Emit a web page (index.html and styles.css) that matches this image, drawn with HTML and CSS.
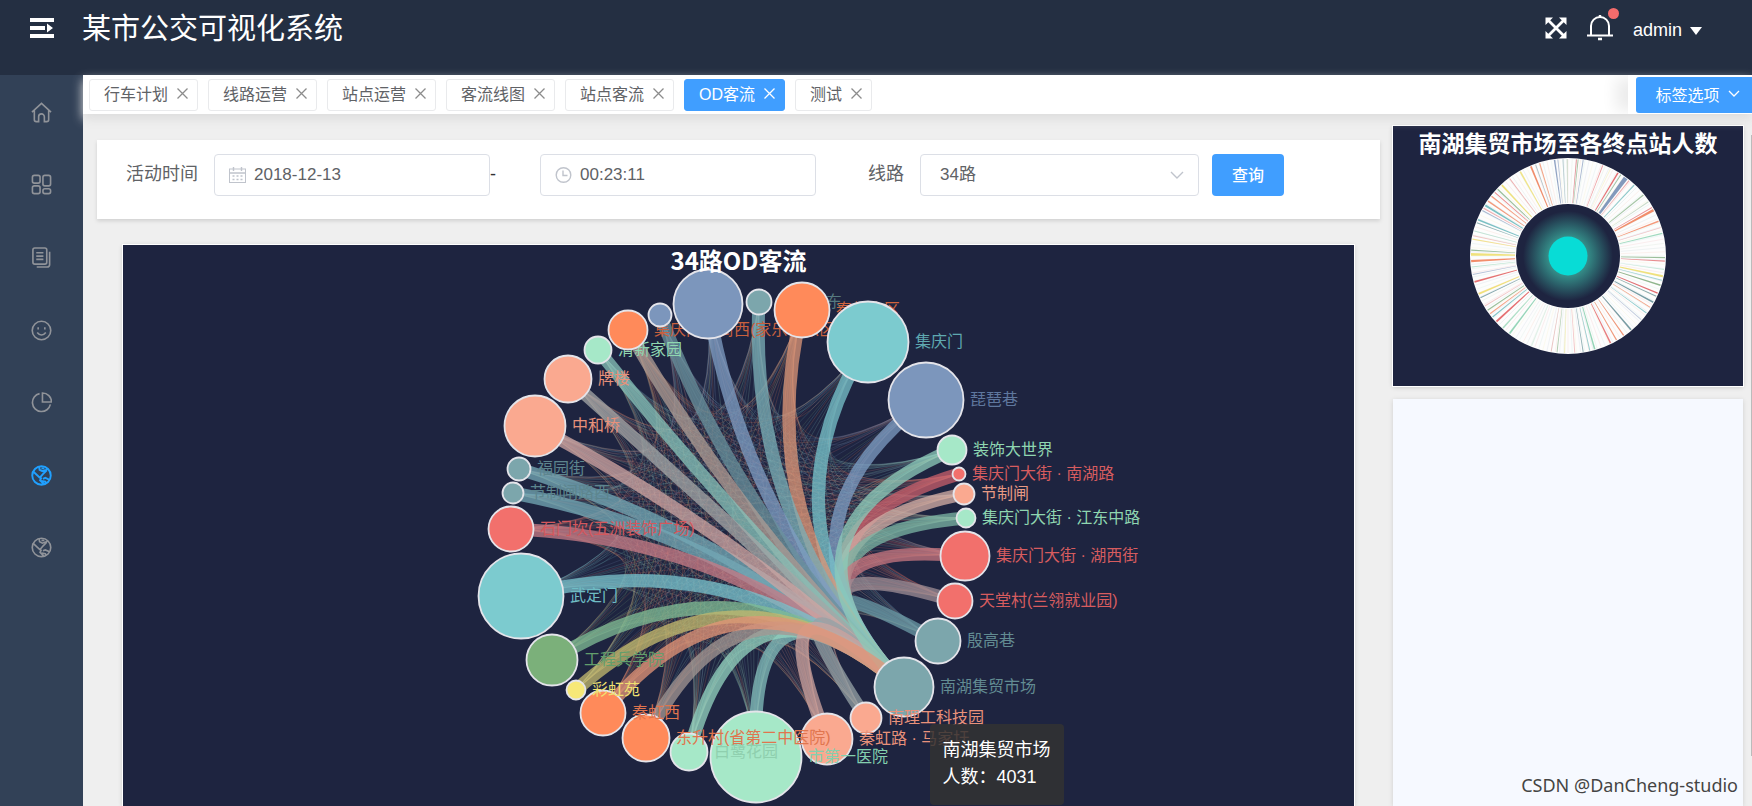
FILE: index.html
```html
<!DOCTYPE html>
<html lang="zh-CN">
<head>
<meta charset="utf-8">
<title>某市公交可视化系统</title>
<link rel="stylesheet" href="styles.css">
</head>
<body>
<div class="app">
  <header class="header">
    <button class="icon-btn menu-btn" aria-label="折叠菜单">
      <svg width="24" height="22" viewBox="0 0 24 22" fill="#fff"><path d="M0 1h24v4H0zM0 9h15v4H0zM0 17h24v4H0zM17 6.500l6 4.500-6 4.500z"/></svg>
    </button>
    <h1 class="brand">某市公交可视化系统</h1>
    <div class="header-right">
      <button class="icon-btn" aria-label="全屏">
        <svg width="22" height="22" viewBox="0 0 22 22"><path d="M3 3l16 16M19 3L3 19" stroke="#fff" stroke-width="2.800"/><path d="M.5.5h7.500l-7.500 7.500zM21.500.5v7.500l-7.500-7.500zM.5 21.500v-7.500l7.500 7.500zM21.500 21.500h-7.500l7.500-7.500z" fill="#fff"/></svg>
      </button>
      <button class="icon-btn bell" aria-label="消息">
        <svg width="26" height="27" viewBox="0 0 26 27" fill="none" stroke="#fff" stroke-width="2"><path d="M4 21.500V12a9 9 0 0 1 18 0v9.500M0 21.500h26"/><path d="M13 3V1M11 25h4" stroke-width="2.400"/></svg>
        <span class="badge"></span>
      </button>
      <button class="user">admin <span class="caret"></span></button>
    </div>
  </header>
  <div class="body">
    <nav class="sidebar">
      <div class="menu">
      <a href="#" aria-label="首页"><svg viewBox="0 0 22 22"><path d="M1 10.500L11 1.500l10 9M3.500 9v9.500a2 2 0 0 0 2 2H8v-5a3 3 0 0 1 6 0v5h2.500a2 2 0 0 0 2-2V9"/></svg></a>
      <a href="#" aria-label="组件"><svg viewBox="0 0 22 22"><rect x="1.500" y="1.500" width="8" height="8" rx="2"/><rect x="12.500" y="1.500" width="8" height="11" rx="2"/><rect x="1.500" y="12.500" width="8" height="8" rx="2"/><rect x="12.500" y="15.500" width="8" height="5" rx="2"/></svg></a>
      <a href="#" aria-label="文档"><svg viewBox="0 0 22 22"><rect x="2" y="1" width="14.500" height="17" rx="2"/><path d="M5.500 6H13M5.500 9.500H13M5.500 13H13M19.500 5v13.500a2.500 2.500 0 0 1-2.500 2.500H6"/></svg></a>
      <a href="#" aria-label="表情"><svg viewBox="0 0 22 22"><circle cx="11" cy="11" r="9.700"/><path d="M6.500 13q4.500 5.500 9 0M7.500 7.500v2.500M14.500 7.500v2.500"/></svg></a>
      <a href="#" aria-label="图表"><svg viewBox="0 0 22 22"><path d="M9 1.700a9.500 9.500 0 1 0 11.300 11.300M12 1v9.500h9.500A9.500 9.500 0 0 0 12 1z"/></svg></a>
      <a href="#" class="active" aria-label="客流"><svg viewBox="0 0 22 22"><circle cx="11" cy="11" r="9.700"/><path d="M2 6.500l7 6.500 1.500 1-1 2 4 4M8.500 2l.5 3 3 1.500 4-1.500 1.500-1M9.500 13l3-3.500 4-4M12.500 14.500l2.500-1 4.500 2M12 20.500v-3.500l3 .5 1 2M11 3.500h3"/></svg></a>
      <a href="#" aria-label="测试"><svg viewBox="0 0 22 22"><circle cx="11" cy="11" r="9.700"/><path d="M2 6.500l7 6.500 1.500 1-1 2 4 4M8.500 2l.5 3 3 1.500 4-1.500 1.500-1M9.500 13l3-3.500 4-4M12.500 14.500l2.500-1 4.500 2M12 20.500v-3.500l3 .5 1 2M11 3.500h3"/></svg></a>
      </div>
    </nav>
    <div class="page">
      <div class="tags">
        <ul class="tag-list">
          <li class="tag"><a href="#">行车计划</a><button aria-label="关闭"><svg viewBox="0 0 11 11"><path d="M.5.5l10 10M10.500.5l-10 10"/></svg></button></li>
          <li class="tag"><a href="#">线路运营</a><button aria-label="关闭"><svg viewBox="0 0 11 11"><path d="M.5.5l10 10M10.500.5l-10 10"/></svg></button></li>
          <li class="tag"><a href="#">站点运营</a><button aria-label="关闭"><svg viewBox="0 0 11 11"><path d="M.5.5l10 10M10.500.5l-10 10"/></svg></button></li>
          <li class="tag"><a href="#">客流线图</a><button aria-label="关闭"><svg viewBox="0 0 11 11"><path d="M.5.5l10 10M10.500.5l-10 10"/></svg></button></li>
          <li class="tag"><a href="#">站点客流</a><button aria-label="关闭"><svg viewBox="0 0 11 11"><path d="M.5.5l10 10M10.500.5l-10 10"/></svg></button></li>
          <li class="tag current"><a href="#">OD客流</a><button aria-label="关闭"><svg viewBox="0 0 11 11"><path d="M.5.5l10 10M10.500.5l-10 10"/></svg></button></li>
          <li class="tag"><a href="#">测试</a><button aria-label="关闭"><svg viewBox="0 0 11 11"><path d="M.5.5l10 10M10.500.5l-10 10"/></svg></button></li>
        </ul>
        <div class="tag-tools">
          <button class="tag-options">标签选项 <svg width="12" height="8" viewBox="0 0 12 8"><path d="M1 1l5 5 5-5" fill="none" stroke="#fff" stroke-width="1.300"/></svg></button>
        </div>
      </div>
      <main class="content">
        <div class="left">
          <form class="filter">
            <label for="date">活动时间</label>
            <div class="field">
              <svg class="prefix" width="17" height="16" viewBox="0 0 17 16" fill="none" stroke="#c0c4cc"><rect x=".5" y="2" width="16" height="13.500"/><path d="M.5 6h16M4.500 0v4M12.500 0v4" stroke-width="1.400"/><path d="M3.500 9h10M3.500 12.500h10" stroke-dasharray="2 2" stroke-width="1.400"/></svg>
              <input id="date" type="text" value="2018-12-13">
            </div>
            <span class="dash">-</span>
            <div class="field">
              <svg class="prefix" width="17" height="16" viewBox="0 0 17 16" fill="none" stroke="#c0c4cc" stroke-width="1.400"><circle cx="8.500" cy="8" r="7.300"/><path d="M8 3.500V8.500h4.500"/></svg>
              <input type="text" value="00:23:11" aria-label="时间">
            </div>
            <label class="route-label" for="route">线路</label>
            <div class="field select-field">
              <select id="route"><option>34路</option></select>
              <svg class="suffix" width="14" height="9" viewBox="0 0 14 9"><path d="M1 1l6 6 6-6" fill="none" stroke="#c0c4cc" stroke-width="1.400"/></svg>
            </div>
            <button type="button" class="query">查询</button>
          </form>
          <section class="chart od">
            <h2>34路OD客流</h2>
            <svg id="od" class="od-svg" viewBox="123 245 1231 561" preserveAspectRatio="xMidYMin meet"></svg>
            <div class="tooltip">南湖集贸市场<br>人数：4031</div>
          </section>
        </div>
        <aside class="right">
          <section class="chart donut">
            <h2>南湖集贸市场至各终点站人数</h2>
            <svg id="donut" width="198" height="198" viewBox="-99 -99 198 198"></svg>
          </section>
          <section class="empty"></section>
        </aside>
      </main>
      <span class="scroll-thumb"></span>
    </div>
  </div>
  <div class="watermark">CSDN @DanCheng-studio</div>
</div>
<script src="chart.js"></script>
</body>
</html>
```
FILE: styles.css
```css
* { box-sizing: border-box; }
body {
  margin: 0;
  font-family: "Liberation Sans", "Noto Sans CJK SC", sans-serif;
  font-size: 16px;
  color: #606266;
}
button { border: 0; padding: 0; background: none; font: inherit; color: inherit; cursor: pointer; }
a { color: inherit; text-decoration: none; }
h1, h2 { margin: 0; }
svg { display: block; }

.app { position: relative; height: 100vh; display: flex; flex-direction: column; overflow: hidden; }
.header {
  flex: none;
  height: 75px;
  padding: 0 50px 20px 30px;
  display: flex;
  align-items: center;
  background: #242f42;
  color: #fff;
}
.brand { margin-left: 28px; padding-top: 3px; font-size: 29px; font-weight: 400; line-height: 40px; }
.header-right { margin-left: auto; display: flex; align-items: center; gap: 20px; font-size: 18px; }
.bell { position: relative; }
.badge { position: absolute; top: -6px; right: -6px; width: 11px; height: 11px; border-radius: 50%; background: #f56c6c; }
.user { display: flex; align-items: center; gap: 8px; padding-top: 6px; }
.caret { border: 6px solid transparent; border-top: 8px solid #fff; border-bottom: 0; }

.body { flex: 1; display: flex; min-height: 0; }
.sidebar { flex: none; width: 83px; padding-top: 1px; background: #324157; color: #909399; }
.menu { height: 508px; display: flex; flex-direction: column; }
.menu a { flex: 1; display: flex; align-items: center; justify-content: center; }
.menu svg { width: 21px; height: 21px; fill: none; stroke: currentColor; stroke-width: 1.700; }
.menu .active { color: #20a0ff; }
.menu .active svg { stroke-width: 2; }

.page { position: relative; flex: 1; min-width: 0; display: flex; flex-direction: column; background: #efefef; }
.tags {
  position: relative;
  z-index: 1;
  flex: none;
  height: 39px;
  display: flex;
  justify-content: space-between;
  background: #fff;
  box-shadow: 0 5px 10px #ddd;
}
.tag-list { display: flex; gap: 10px; margin: 0; padding: 4px 0 0 6px; list-style: none; }
.tag {
  height: 32px;
  display: flex;
  align-items: center;
  gap: 9px;
  padding: 0 9px 4px 14px;
  border: 1px solid #e9eaec;
  border-radius: 3px;
}
.tag svg { width: 11px; height: 11px; fill: none; stroke: #8c8c8c; stroke-width: 1.300; }
.tag.current { background: #409eff; border-color: #409eff; color: #fff; }
.tag.current svg { stroke: #fff; }
.tag-tools { padding: 2px 0 2px 8px; background: #fff; box-shadow: -15px 0 15px -3px rgba(0, 0, 0, .08); clip-path: inset(0 0 0 -40px); }
.tag-options {
  height: 36px;
  width: 116px;
  display: flex;
  align-items: center;
  justify-content: center;
  gap: 8px;
  padding: 0 0 3px 7px;
  border-radius: 3px 0 0 3px;
  background: #409eff;
  color: #fff;
}

.content { flex: 1; min-height: 0; display: flex; gap: 13px; padding: 12px 9px 0 14px; }
.left { flex: 1; min-width: 0; padding-top: 14px; }
.filter {
  height: 79px;
  display: flex;
  padding: 14px 29px 23px;
  background: #fff;
  box-shadow: 0 2px 4px rgba(0, 0, 0, .13);
}
.filter label { flex: none; width: 88px; font-size: 18px; line-height: 40px; }
.filter .route-label { width: auto; margin: 0 16px 0 52px; }
.field { position: relative; flex: 0 1 276px; min-width: 0; }
.field input, .field select {
  width: 100%;
  height: 42px;
  padding: 0 12px 0 39px;
  border: 1px solid #dcdfe6;
  border-radius: 4px;
  background: #fff;
  font: inherit;
  font-size: 17px;
  color: #606266;
}
.select-field { flex-basis: 279px; }
.field select { padding: 0 40px 2px 19px; appearance: none; }
.prefix { position: absolute; left: 15px; top: 13px; }
.suffix { position: absolute; right: 15px; top: 17px; pointer-events: none; }
.dash { flex: none; width: 50px; line-height: 40px; font-size: 18px; color: #303133; }
.query { flex: none; width: 72px; height: 42px; margin-left: 13px; padding-bottom: 2px; border-radius: 4px; background: #409eff; color: #fff; font-weight: 500; }

.chart { position: relative; background: #1e2440; box-shadow: 0 0 0 1px #fff, 0 1px 5px rgba(0, 0, 0, .2); }
.chart h2 { font-family: "Noto Sans CJK SC", sans-serif; font-size: 23px; line-height: 32px; text-align: center; color: #fff; }
.od { margin: 26px 26px 0; }
.od h2 { position: absolute; inset: 0 0 auto; font-size: 24px; line-height: 30px; }
.od-svg { width: 100%; }
.od-svg text { font-family: "Liberation Sans", "Noto Sans CJK SC", sans-serif; font-size: 16px; }
.tooltip {
  position: absolute;
  left: calc(50% + 191px);
  top: 479px;
  padding: 13px 13px 14px;
  border-radius: 4px;
  background: rgba(50, 50, 50, .85);
  font-size: 18px;
  line-height: 27px;
  white-space: nowrap;
  color: #fff;
}

.right { flex: 0 0 350px; display: flex; flex-direction: column; gap: 13px; }
.donut { flex: none; height: 260px; }
.donut svg { margin: -1px auto 0; }
.empty { flex: 1; background: #f6f9ff; box-shadow: 0 1px 5px rgba(0, 0, 0, .13); }
.scroll-thumb { position: absolute; right: 0; top: 60px; bottom: 50px; width: 1px; background: #bbb; }
.watermark {
  position: absolute;
  right: 14px;
  bottom: 8px;
  font-family: "Noto Sans", sans-serif;
  font-size: 18px;
  line-height: 26px;
  color: #444;
  text-shadow: 0 0 1px #fff;
}
```
FILE: chart.js
```js
const NS = 'http://www.w3.org/2000/svg';
function add(parent, tag, attrs, text) {
  const el = document.createElementNS(NS, tag);
  for (const k in attrs) el.setAttribute(k, attrs[k]);
  if (text) el.textContent = text;
  parent.appendChild(el);
  return el;
}

const BLUE = '#7c96bc', TEAL = '#7ca6ac', ORANGE = '#ff8a5a', CYAN = '#7ccbcf', MINT = '#a6e8c8',
  RED = '#f2706c', SALMON = '#faa990', GREEN = '#7bb07a', YELLOW = '#f7e878';

// x, y, radius, fill, label, label colour, link colour
const nodes = [
  [926, 400, 37, BLUE, '琵琶巷', '#5f779e', '#7490b4'],
  [952, 450, 14, MINT, '装饰大世界', '#8fd6b0', '#82bcab'],
  [959, 474, 6, RED, '集庆门大街 · 南湖路', '#d75c5f', '#b85862'],
  [964, 494, 10, SALMON, '节制闸', '#e89a84', '#c4a299'],
  [966, 518, 9, MINT, '集庆门大街 · 江东中路', '#8fd6b0', '#71a797'],
  [965, 556, 24, RED, '集庆门大街 · 湖西街', '#d75c5f', '#b76d76'],
  [955, 601, 17, RED, '天堂村(兰翎就业园)', '#d75c5f', '#91838a'],
  [938, 641, 22, TEAL, '殷高巷', '#628b92', '#638f9a'],
  [904, 687, 29, TEAL, '南湖集贸市场', '#628b92', null],
  [866, 718, 15, SALMON, '南理工科技园', '#e8917a', '#8a9699'],
  [827, 739, 25, SALMON, '秦虹路 · 马家圩', '#e8917a', '#bd9793'],
  [756, 757, 45, MINT, '市第一医院', '#84cfae', '#78b0ae'],
  [689, 752, 18, MINT, '白鹭花园', '#8fcfae', '#88c4b2'],
  [646, 738, 23, ORANGE, '东升村(省第二中医院)', '#e0754e', '#978c88'],
  [603, 713, 22, ORANGE, '秦虹西', '#e0754e', '#d18a6f'],
  [576, 690, 9, YELLOW, '彩虹苑', '#efe070', '#b5ab66'],
  [552, 660, 25, GREEN, '工程兵学院', '#629e6c', '#76ae8a'],
  [521, 596, 42, CYAN, '武定门', '#6fbcc4', '#70b4be'],
  [511, 529, 22, RED, '石门坎(五洲装饰广场)', '#d4575c', '#b8727c'],
  [513, 493, 10, TEAL, '节制闸路西', '#5d858e', '#6b9ca8'],
  [519, 469, 11, TEAL, '福园街', '#5d858e', '#6b9ca8'],
  [535, 426, 30, SALMON, '中和桥', '#e8917a', '#c09a97'],
  [568, 379, 23, SALMON, '牌楼', '#e8917a', '#989b9b'],
  [598, 350, 13, MINT, '清新家园', '#8fd6b0', '#7db4ab'],
  [628, 330, 19, ORANGE, '集庆门大街西(家乐福东区)', '#c8603e', '#a09189'],
  [660, 315, 11, BLUE, '', '#5f779e', '#618591'],
  [708, 304, 34, BLUE, '', '#5f779e', '#7590b4'],
  [759, 302, 12, TEAL, '雨花新东', '#55797f', '#71a2a9'],
  [802, 310, 27, ORANGE, '秦虹小区', '#d0643e', '#cc8b6e'],
  [868, 342, 40, CYAN, '集庆门', '#5fa8b0', '#6fb4bb']
];
const center = [738.5, 529];
const target = nodes[8];

function arc(a, b) {
  const cx = center[0] * 0.9 + (a[0] + b[0]) * 0.05;
  const cy = center[1] * 0.9 + (a[1] + b[1]) * 0.05;
  return `M${a[0]} ${a[1]}Q${cx} ${cy} ${b[0]} ${b[1]}`;
}
function lighten(hex) {
  const ch = [1, 3, 5].map(i => Math.min(255, Math.round(parseInt(hex.slice(i, i + 2), 16) * 1.08)));
  return `rgb(${ch.join(',')})`;
}

const od = document.getElementById('od');
const mesh = add(od, 'g', { fill: 'none', 'stroke-width': 1 });
nodes.forEach((a, i) => nodes.forEach((b, j) => {
  if (j > i) add(mesh, 'path', { d: arc(a, b), stroke: (i + j) % 2 ? a[3] : b[3], 'stroke-opacity': 0.17 });
}));
// Links on the lower left are painted last, over the bundle
const links = add(od, 'g', { fill: 'none', 'stroke-width': 13 });
const order = [2, 3, 4, 5, 6, 7, 0, 29, 28, 27, 26, 25, 24, 23, 22, 20, 19, 18, 21, 17, 16, 15, 9, 11, 12, 13, 10, 1, 14];
order.forEach(i => add(links, 'path', { d: arc(nodes[i], target), stroke: lighten(nodes[i][6]), 'stroke-opacity': 0.76 }));
nodes.forEach(n => {
  add(od, 'circle', { cx: n[0], cy: n[1], r: n[2] + 0.5, fill: n[3], stroke: '#e4e4ea', 'stroke-width': 1.8 });
  if (n[4]) add(od, 'text', { x: n[0] + n[2] + 7, y: n[1] + 5, fill: n[5] }, n[4]);
});

// Clockwise angle from the top, colour, width, strength
const rays = [
  [5, 'r', 1, .7], [6, 'g', 1, .8], [9, 'b', 1, .7], [21, 'r', 1, .7], [26, 'y', 1, .3], [31, 'r', 1.6, 1], [33, 'g', 1, .9],
  [36.5, 'b', 4.5, 1], [39, 'r', 1, .6], [43, 't', 1.2, .9], [51, 'g', 1.4, .8], [56, 'g', 1, .5], [60, 'r', 1, .7],
  [61.8, 'o', 2.4, 1], [69, 'o', 1.4, .9], [73, 'r', 1, .4], [76.5, 'm', 1.4, .9], [91, 'g', 1.3, .9], [93, 'r', 1.2, .8],
  [98, 'm', 1, .5], [102, 'y', 2, 1], [104.5, 't', 1, .7], [107.5, 'g', 1.5, 1], [112.5, 'r', 1.6, 1], [114.5, 'k', 1, .9],
  [118.5, 'k', 1.6, 1], [122, 'o', 1, .8], [126, 't', 1, .8], [131, 'b', 1, .5], [139.5, 'k', 1.8, 1], [145, 'o', 1.3, .9],
  [150, 'o', 1.3, .9], [154, 'r', 1.6, .9], [164, 'm', 1.6, 1], [167, 't', 1, .8], [171, 'k', 1, .8], [176, 'r', 1, .4],
  [182, 'y', 1, .5], [186.5, 'g', 1, .7], [190, 'r', 1, .4], [202, 'm', 1, .3], [217, 'm', 1.8, 1], [222, 'm', 1.4, .8],
  [227.5, 'r', 1.9, 1], [231, 't', 1.4, .9], [233.5, 'o', 1.4, .8], [236, 'g', 1.4, .9], [239, 'r', 1, .4],
  [244.5, 'k', 1, .9], [247, 'y', 1.8, 1], [254.5, 'r', 1.8, 1], [259, 'b', 1, .6], [263.5, 'm', 1, .6], [267, 'o', 2.2, 1],
  [271, 'y', 2.8, 1], [273.5, 'g', 1.2, .9], [280, 'y', 1.3, .8], [282, 'r', 1, .4], [285, 'm', 1, .5], [290, 'k', 1, .8],
  [292, 't', 1.6, 1], [298, 'b', 1, .7], [299.5, 'r', 1, .6], [301.5, 't', 2, 1], [304.5, 'o', 1.5, .9], [308, 'o', 1.3, .9],
  [311, 'r', 1.2, .8], [313.5, 'g', 1.4, .9], [317, 'y', 1.8, 1], [323, 'r', 1, .6], [330.5, 'y', 1.6, .9],
  [337.5, 'o', 1.8, 1], [340.5, 'k', 1, .6], [343, 'o', 1.2, .8], [352, 'b', 1.4, .9], [354, 'b', 1, .6], [357, 'k', 1, .5], [359.5, 'g', 1, .5]
];
const palette = { r: '#e0585c', o: '#f07a52', y: '#eddc66', g: '#7cab7c', m: '#82ceaa', t: '#62b5b8', k: '#5f8c94', b: '#6d87b0' };
const donut = document.getElementById('donut');
const defs = add(donut, 'defs', {});
const glow = add(defs, 'radialGradient', { id: 'glow' });
add(glow, 'stop', { offset: '0.4', 'stop-color': '#3aa79a', 'stop-opacity': 0.85 });
add(glow, 'stop', { offset: '1', 'stop-color': '#3aa79a', 'stop-opacity': 0 });
add(donut, 'circle', { r: 75, fill: 'none', stroke: '#fdfdfd', 'stroke-width': 46 });
for (let i = 0; i < 144; i++) {
  add(donut, 'path', { d: 'M0-97V-53', transform: `rotate(${i * 2.5})`, stroke: Object.values(palette)[(i * 3) % 8], 'stroke-width': 0.8, opacity: 0.1 });
}
rays.forEach(([a, c, w, o]) => {
  add(donut, 'path', { d: `M${-w / 2}-97h${w}L${w / 4}-53h${-w / 2}z`, transform: `rotate(${a})`, fill: palette[c], opacity: o * 0.85 });
});
add(donut, 'circle', { r: 45, fill: 'url(#glow)' });
add(donut, 'circle', { r: 19.5, fill: '#08dcd6' });
```
